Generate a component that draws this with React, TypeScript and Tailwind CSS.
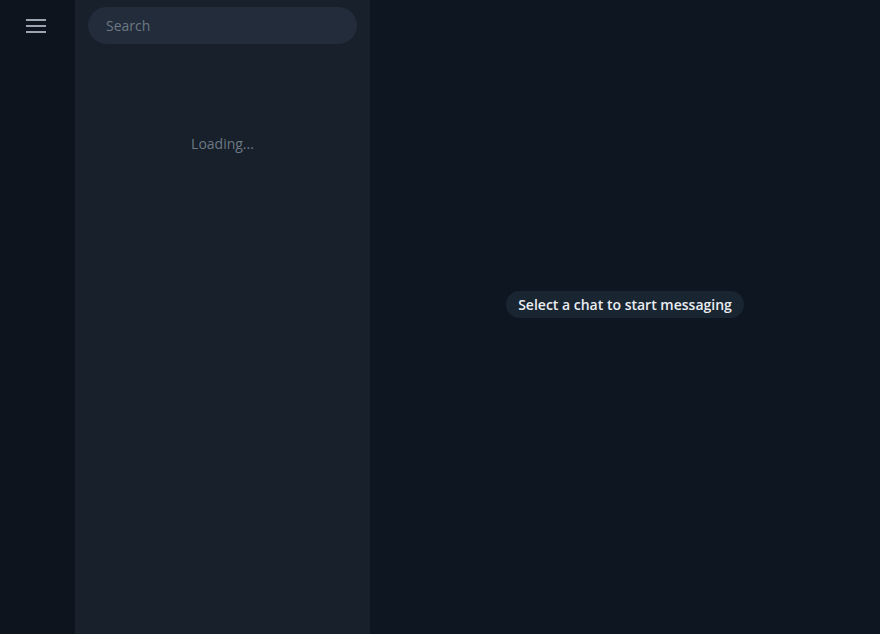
import React from "react";

export default function App() {
  return (
    <div
      className="flex h-[634px] w-[880px] overflow-hidden bg-[#0e1621]"
      style={{ fontFamily: '"Open Sans", "Noto Sans", sans-serif' }}
    >
      <div className="flex w-[75px] shrink-0 flex-col items-start bg-[#0e141e] pl-[26px] pt-[19px]">
        <div className="flex w-[20px] flex-col gap-[4px]">
          <div className="h-[2px] w-[20px] bg-[#9aa5b1]" />
          <div className="h-[2px] w-[20px] bg-[#9aa5b1]" />
          <div className="h-[2px] w-[20px] bg-[#9aa5b1]" />
        </div>
      </div>
      <div className="flex w-[295px] shrink-0 flex-col bg-[#17202b]">
        <div className="px-[13px] pt-[7px]">
          <div className="flex h-[37px] items-center rounded-full bg-[#222c3a] pl-[18px] text-[14px] text-[#6c7883]">
            Search
          </div>
        </div>
        <div className="mt-[89px] text-center text-[14px] text-[#6c7883]">Loading...</div>
      </div>
      <div className="flex flex-1 items-center justify-center bg-[#0e1621]">
        <div className="mt-[-26px] rounded-full bg-[#1a2532] px-[12px] py-[3px] text-[14px] font-semibold text-[#e9edf1]">
          Select a chat to start messaging
        </div>
      </div>
    </div>
  );
}
